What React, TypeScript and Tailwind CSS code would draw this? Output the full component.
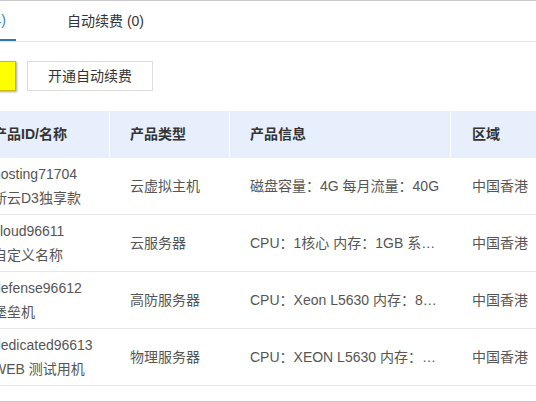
import React from "react";

const rows = [
  { id: "hosting71704", name: "新云D3独享款", type: "云虚拟主机", info: "磁盘容量：4G 每月流量：40G", region: "中国香港" },
  { id: "cloud96611", name: "自定义名称", type: "云服务器", info: "CPU：1核心 内存：1GB 系统盘：40GB", region: "中国香港" },
  { id: "defense96612", name: "堡垒机", type: "高防服务器", info: "CPU：Xeon L5630 内存：8GB 硬盘：500GB", region: "中国香港" },
  { id: "dedicated96613", name: "WEB 测试用机", type: "物理服务器", info: "CPU：XEON L5630 内存：DDR3 16GB", region: "中国香港" },
];

export default function App() {
  return (
    <div
      className="w-[536px] h-[402px] overflow-hidden bg-white text-[14px] text-[#555]"
      style={{ fontFamily: '"Liberation Sans", "Noto Sans CJK SC", sans-serif' }}
    >
      <div className="h-px bg-[#c8c8c8]" />
      <div className="ml-[-64px] w-[720px]">
        {/* tabs */}
        <div className="flex border-b border-[#e5e5e5] pl-[11px]">
          <div className="h-[40px] w-[69px] -mb-px flex items-center justify-end pr-[10px] border-b-2 border-[#2f78b7] text-[#3b7fc4] whitespace-nowrap">
            全部 (4)
          </div>
          <div className="h-[40px] ml-[41px] px-[10px] flex items-center text-[#333] whitespace-nowrap">
            自动续费 (0)
          </div>
        </div>

        {/* buttons */}
        <div className="flex mt-[19px]">
          <div className="w-[80px] h-[30px] bg-[#ffff00] border border-[#cdbb00] shadow-[1px_1px_2px_rgba(0,0,0,0.35)]" />
          <button className="ml-[11px] h-[30px] px-[20px] border border-[#dcdcdc] bg-white text-[#333] text-[14px] leading-none">
            开通自动续费
          </button>
        </div>

        {/* table */}
        <div className="ml-[37px] mt-[20px]">
          <div className="grid grid-cols-[137px_120px_221px_160px] h-[47px] bg-[#e6effb] text-[#333] font-bold">
            <div className="flex items-center px-[20px] border-r border-white whitespace-nowrap">产品ID/名称</div>
            <div className="flex items-center px-[20px] border-r border-white whitespace-nowrap">产品类型</div>
            <div className="flex items-center px-[20px] border-r border-white whitespace-nowrap">产品信息</div>
            <div className="flex items-center px-[21px] whitespace-nowrap">区域</div>
          </div>
          {rows.map((r) => (
            <div key={r.id} className="grid grid-cols-[137px_120px_221px_160px] h-[57px] border-b border-[#e8e8e8]">
              <div className="flex flex-col justify-center px-[20px] leading-[24px] whitespace-nowrap">
                <span>{r.id}</span>
                <span>{r.name}</span>
              </div>
              <div className="flex items-center px-[20px] whitespace-nowrap">{r.type}</div>
              <div className="flex items-center pl-[20px] pr-[6px] min-w-0">
                <span className="truncate">{r.info}</span>
              </div>
              <div className="flex items-center px-[21px] whitespace-nowrap">{r.region}</div>
            </div>
          ))}
        </div>
      </div>
      <div className="mt-[15px] h-px bg-[#c8c8c8]" />
    </div>
  );
}
